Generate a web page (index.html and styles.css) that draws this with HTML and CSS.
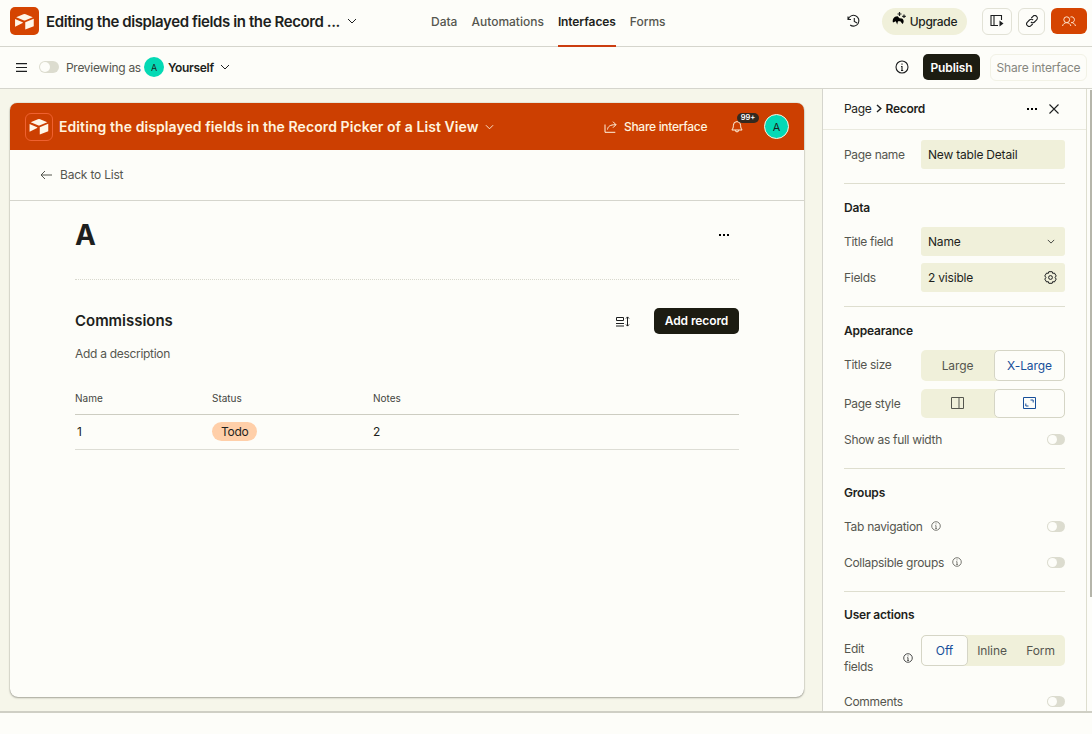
FILE: index.html
```html
<!DOCTYPE html>
<html lang="en">
<head>
  <meta charset="utf-8">
  <title>Interface designer</title>
  <link rel="stylesheet" href="styles.css">
</head>
<body>
  <svg class="defs" width="0" height="0">
    <symbol id="logo" viewBox="0 0 20 18">
      <path d="M1.2 4.4 8.8 1.2a3 3 0 0 1 2.4 0l7.6 3.2-7.7 3.2a3 3 0 0 1-2.2 0z"/>
      <path d="M0 6.3v8.2l8-3.8c.4-.2.4-.7 0-.9z"/>
      <path d="M10.8 9.7v7.8l9-3.6V6z"/>
    </symbol>
    <symbol id="chevron" viewBox="0 0 10 6">
      <path d="M1 1l4 4 4-4" fill="none" stroke="currentColor" stroke-width="1"/>
    </symbol>
    <symbol id="info" viewBox="0 0 14 14">
      <g fill="none" stroke="currentColor" stroke-width="1.1">
        <circle cx="7" cy="7" r="6"/>
        <path d="M6 6.5h1v4M6 10.5h2.2M7 3.4v1.3"/>
      </g>
    </symbol>
  </svg>

  <!-- Top bar -->
  <header class="topbar">
    <div class="base">
      <div class="base-icon"><svg width="19" height="17"><use href="#logo"/></svg></div>
      <span class="base-name">Editing the displayed fields in the Record ...</span>
      <svg class="base-chevron" width="10" height="6"><use href="#chevron"/></svg>
    </div>
    <nav class="tabs">
      <a class="tab">Data</a>
      <a class="tab">Automations</a>
      <a class="tab active">Interfaces</a>
      <a class="tab">Forms</a>
    </nav>
    <div class="top-actions">
      <svg class="history" width="14" height="14" viewBox="0 0 14 14" fill="none" stroke="currentColor" stroke-width="1.1">
        <path d="M1 2.5v3h3M1.3 5.3A5.4 5.4 0 1 1 3.2 11M7.3 4v3.4l2.8 1.6"/>
      </svg>
      <button class="upgrade">
        <svg width="14" height="14" viewBox="0 0 14 14">
          <path d="M1 10.5C0 7.5 2 4 5.6 4.2L7.5 6.3 10 6.5C12.3 8 12 10.5 10.5 12L8.3 9.2 6 9.3 5.2 12.5 3.8 9.3z"/>
          <path d="M7.5 0v4M5.5 2h4M12 2.5v3.6M10.2 4.3h3.6" fill="none" stroke="currentColor" stroke-width="1.2"/>
        </svg>
        Upgrade
      </button>
      <button class="icon-btn wide">
        <svg width="14" height="12" viewBox="0 0 14 12" fill="none" stroke="currentColor" stroke-width="1.1">
          <path d="M8 10.5H1v-10h10.5V5M4 .5v10"/>
          <path d="M9.5 5.5v6l4-3z" fill="currentColor" stroke="none"/>
        </svg>
      </button>
      <button class="icon-btn">
        <svg width="12" height="12" viewBox="0 0 12 12" fill="none" stroke="currentColor" stroke-width="1.1">
          <path d="M5.3 3 7 1.3a2.5 2.5 0 0 1 3.6 3.6L8.5 7a2.5 2.5 0 0 1-3.6 0M6.7 9 5 10.7a2.5 2.5 0 0 1-3.6-3.6L3.5 5a2.5 2.5 0 0 1 3.6 0"/>
        </svg>
      </button>
      <button class="people">
        <svg width="14" height="11" viewBox="0 0 14 11" fill="none" stroke="currentColor" stroke-width="1">
          <circle cx="4.7" cy="3.7" r="2.9"/>
          <path d="M.5 10C1.2 7.8 2.7 6.7 4.7 6.7S8.2 7.8 8.9 10M8.5 1a2.9 2.9 0 1 1 .8 5.6c2 0 3.5 1.1 4.2 3.4"/>
        </svg>
      </button>
    </div>
  </header>

  <!-- Preview bar -->
  <div class="subbar">
    <svg class="menu" width="11" height="9" viewBox="0 0 11 9" stroke="currentColor" stroke-width="1.2">
      <path d="M0 .6h11M0 4.5h11M0 8.4h11"/>
    </svg>
    <span class="toggle big"></span>
    <span class="preview-label">Previewing as</span>
    <span class="avatar">A</span>
    <strong class="preview-user">Yourself</strong>
    <svg width="10" height="6"><use href="#chevron"/></svg>
    <div class="sub-actions">
      <svg width="14" height="14"><use href="#info"/></svg>
      <button class="dark-btn publish">Publish</button>
      <button class="share-disabled">Share interface</button>
    </div>
  </div>

  <main class="workspace">
    <section class="canvas">
      <div class="card">
        <div class="card-header">
          <div class="card-icon"><svg width="20" height="17"><use href="#logo"/></svg></div>
          <span class="card-title">Editing the displayed fields in the Record Picker of a List View</span>
          <svg width="9" height="6"><use href="#chevron"/></svg>
          <div class="card-tools">
            <svg width="13" height="12" viewBox="0 0 13 12" fill="none" stroke="currentColor" stroke-width="1">
              <path d="M1 3.5v7.8h10.3M3.5 8.5c.4-2.9 2.300-4.8 8.300-4.8M9 .7l3 3-3 3"/>
            </svg>
            <span class="card-share">Share interface</span>
            <div class="bell">
              <svg width="12" height="13" viewBox="0 0 12 13" fill="none" stroke="currentColor" stroke-width="1">
                <path d="M2.4 5.2a3.6 3.6 0 0 1 7.2 0c0 2.6.7 3.6 1.5 4.8H.9c.8-1.2 1.5-2.200 1.5-4.800zM4.300 10.200a1.700 1.700 0 0 0 3.400 0"/>
              </svg>
              <span class="badge">99+</span>
            </div>
            <span class="avatar ring">A</span>
          </div>
        </div>
        <div class="back">
          <svg width="12" height="10" viewBox="0 0 12 10" fill="none" stroke="currentColor"><path d="M5 1 1 5l4 4M1 5h11"/></svg>
          Back to List
        </div>
        <div class="record">
          <div class="record-head">
            <h1>A</h1>
            <svg width="10" height="2" viewBox="0 0 10 2"><path d="M0 0h2v2H0zM4 0h2v2H4zM8 0h2v2H8z"/></svg>
          </div>
          <div class="group-head">
            <h2>Commissions</h2>
            <svg width="14" height="11" viewBox="0 0 14 11" fill="none" stroke="currentColor">
              <path d="M.5 1.5h7v3h-7zM0 7.5h8M0 10h8M11.5 1v9M10 2.5l1.5-1.6L13 2.5M10 8.5l1.5 1.6L13 8.5"/>
            </svg>
            <button class="dark-btn add">Add record</button>
          </div>
          <p class="description">Add a description</p>
          <div class="row head"><span>Name</span><span>Status</span><span>Notes</span></div>
          <div class="row"><span class="num">1</span><span><em class="pill">Todo</em></span><span>2</span></div>
        </div>
      </div>
    </section>

    <!-- Properties panel -->
    <aside class="panel">
      <div class="crumbs">
        <span>Page</span>
        <svg width="6" height="9" viewBox="0 0 6 9" fill="none" stroke="currentColor" stroke-width="1.4"><path d="M1 1l3.8 3.5L1 8"/></svg>
        <strong>Record</strong>
        <svg class="more" width="10" height="2" viewBox="0 0 10 2"><path d="M0 0h2v2H0zM4 0h2v2H4zM8 0h2v2H8z"/></svg>
        <svg width="10" height="10" viewBox="0 0 10 10" stroke="currentColor" stroke-width="1.1"><path d="M.5.5l9 9M9.5.5l-9 9"/></svg>
      </div>
      <div class="group page-group">
        <div class="prop"><label>Page name</label><div class="field">New table Detail</div></div>
      </div>
      <div class="group data-group">
        <h3>Data</h3>
        <div class="prop">
          <label>Title field</label>
          <div class="field">Name <svg class="field-chevron" width="8" height="5"><use href="#chevron"/></svg></div>
        </div>
        <div class="prop">
          <label>Fields</label>
          <div class="field">2 visible
            <svg width="13" height="13" viewBox="0 0 13 13" fill="none" stroke="currentColor">
              <path d="M4.8.7h3.4l.5 1.7 1.7-.4 1.8 2.9-1.1 1.6 1.1 1.6-1.8 2.9-1.7-.4-.5 1.7H4.8l-.5-1.7-1.7.4L.8 8.1l1.1-1.6L.8 4.900 2.600 2l1.700.4z"/>
              <circle cx="6.5" cy="6.5" r="1.9"/>
            </svg>
          </div>
        </div>
      </div>
      <div class="group look-group">
        <h3>Appearance</h3>
        <div class="prop size-prop">
          <label>Title size</label>
          <div class="segment"><span>Large</span><span class="on">X-Large</span></div>
        </div>
        <div class="prop style-prop">
          <label>Page style</label>
          <div class="segment short">
            <span><svg width="13" height="12" viewBox="0 0 13 12" fill="none" stroke="currentColor"><path d="M.5.5h12v11H.5zM8 .5v11"/></svg></span>
            <span class="on"><svg width="13" height="12" viewBox="0 0 13 12" fill="none" stroke="currentColor"><path d="M.5.5h12v11H.5zM7.5 3h2.7v2.5M5.5 9H2.8V6.5"/></svg></span>
          </div>
        </div>
        <div class="prop width-prop"><label>Show as full width</label><span class="toggle"></span></div>
      </div>
      <div class="group tabs-group">
        <h3>Groups</h3>
        <div class="prop"><label>Tab navigation <svg width="10" height="10"><use href="#info"/></svg></label><span class="toggle"></span></div>
        <div class="prop"><label>Collapsible groups <svg width="10" height="10"><use href="#info"/></svg></label><span class="toggle"></span></div>
      </div>
      <div class="group actions-group">
        <h3>User actions</h3>
        <div class="prop edit-prop">
          <label class="two-line">Edit fields</label>
          <svg class="edit-info" width="10" height="10"><use href="#info"/></svg>
          <div class="segment three"><span class="on">Off</span><span>Inline</span><span>Form</span></div>
        </div>
        <div class="prop"><label>Comments</label><span class="toggle"></span></div>
      </div>
    </aside>
    <div class="scrollbar"><div class="thumb"></div></div>
  </main>
</body>
</html>
```
FILE: styles.css
```css
* {
  box-sizing: border-box;
}

body {
  margin: 0;
  height: 734px;
  overflow: hidden;
  background: #fdfdf9;
  color: #1d1f20;
  font-family: Inter, "Liberation Sans", sans-serif;
  font-size: 12px;
  letter-spacing: -0.3px;
}

h1, h2, h3, p {
  margin: 0;
}

button {
  font: inherit;
  letter-spacing: inherit;
  color: inherit;
  padding: 0;
  border: 0;
  display: flex;
  align-items: center;
  justify-content: center;
}

svg {
  flex: none;
  display: block;
}

.defs {
  display: none;
}

/* Top bar */
.topbar {
  display: flex;
  height: 47px;
  border-bottom: 1px solid #d5d5cd;
}

.base {
  display: flex;
  align-items: center;
  width: 431px;
  padding: 0 0 4px 10px;
}

.base-icon {
  display: flex;
  align-items: center;
  justify-content: center;
  width: 29px;
  height: 28px;
  margin-right: 7px;
  border-radius: 5px;
  background: #d54401;
  fill: #fff7e8;
}

.base-name {
  width: 294px;
  margin-right: 7px;
  font-size: 15px;
  font-weight: 600;
  letter-spacing: -0.4px;
  white-space: nowrap;
}

.tabs {
  display: flex;
  gap: 14px;
}

.tab {
  height: 47px;
  line-height: 43px;
  font-weight: 500;
  color: #55564f;
  letter-spacing: 0;
}

.tab.active {
  color: #1d1f20;
  font-weight: 600;
  letter-spacing: -0.1px;
  border-bottom: 2px solid #cb3d10;
}

.top-actions {
  display: flex;
  align-items: center;
  margin-left: auto;
  padding: 0 5px 4px 0;
}

.history {
  margin-right: 2px;
}

.upgrade {
  gap: 4px;
  width: 85px;
  height: 27px;
  margin: 0 15px 0 19px;
  border-radius: 14px;
  background: #f0f0da;
  font-weight: 500;
}

.upgrade svg {
  margin-bottom: 4px;
}

.icon-btn {
  width: 27px;
  height: 27px;
  margin-right: 6px;
  border: 1px solid #e2e2d6;
  border-radius: 6px;
  background: none;
}

.icon-btn.wide {
  width: 30px;
}

.people {
  width: 36px;
  height: 26px;
  border-radius: 6px;
  background: #d54401;
  color: #ffe6d0;
}

/* Preview bar */
.subbar {
  display: flex;
  align-items: center;
  height: 42px;
  padding: 0 5px 1px 16px;
  border-bottom: 1px solid #d5d5cd;
}

.toggle {
  position: relative;
  flex: none;
  width: 18px;
  height: 11px;
  border-radius: 6px;
  background: #dcdccf;
}

.toggle::before {
  content: "";
  position: absolute;
  left: 1px;
  top: 1px;
  width: 9px;
  height: 9px;
  border-radius: 50%;
  background: #fdfdf9;
}

.toggle.big {
  width: 20px;
  height: 12px;
  margin: 0 7px 0 12px;
}

.toggle.big::before {
  width: 10px;
  height: 10px;
}

.preview-label {
  color: #55564f;
}

.avatar {
  display: flex;
  align-items: center;
  justify-content: center;
  width: 20px;
  height: 20px;
  margin: 0 4px 0 3px;
  border-radius: 50%;
  background: #04d9b4;
  font-size: 9px;
}

.preview-user {
  margin-right: 6px;
  font-weight: 600;
}

.sub-actions {
  display: flex;
  align-items: center;
  margin-left: auto;
}

.dark-btn {
  height: 26px;
  border-radius: 5px;
  background: #1c1c12;
  color: #fff;
  font-weight: 600;
  letter-spacing: -0.1px;
}

.publish {
  width: 57px;
  margin: 0 10px 0 14px;
}

.share-disabled {
  width: 97px;
  height: 27px;
  border: 1px solid #f2f2e6;
  border-radius: 6px;
  background: none;
  color: #85867e;
  letter-spacing: -0.18px;
}

/* Workspace */
.workspace {
  display: flex;
  height: 624px;
  border-bottom: 2px solid #cfcfc5;
}

.canvas {
  width: 822px;
  padding: 14px 18px 14px 10px;
  background: #f6f6ea;
}

.card {
  height: 594px;
  border-radius: 8px;
  background: #fdfdf9;
  box-shadow: 0 0 1px #77776c, 0 1px 2px #aaaa9f;
}

.card-header {
  display: flex;
  align-items: center;
  height: 47px;
  padding: 0 15px;
  border-radius: 7px 7px 0 0;
  background: #cc3f01;
  color: #fff3df;
}

.card-icon {
  display: flex;
  align-items: center;
  justify-content: center;
  width: 28px;
  height: 28px;
  margin-right: 6px;
  border: 1px solid #ef6130;
  border-radius: 6px;
  fill: #fff7e8;
}

.card-title {
  width: 420px;
  margin-right: 6px;
  font-size: 14px;
  font-weight: 600;
  letter-spacing: 0.08px;
  white-space: nowrap;
}

.card-tools {
  display: flex;
  align-items: center;
  margin-left: auto;
}

.card-share {
  width: 83px;
  margin: 0 24px 0 7px;
  font-weight: 500;
  white-space: nowrap;
}

.bell {
  position: relative;
  margin-right: 21px;
}

.badge {
  position: absolute;
  left: 6px;
  top: -7px;
  width: 22px;
  height: 10px;
  border-radius: 5px;
  background: #33291f;
  color: #fff;
  font-size: 7.5px;
  font-weight: 600;
  letter-spacing: 0;
  line-height: 10px;
  text-align: center;
}

.avatar.ring {
  width: 25px;
  height: 25px;
  margin: 0;
  border: 1px solid #fff3df;
  color: #1d1f20;
  font-size: 11px;
}

.back {
  display: flex;
  align-items: center;
  gap: 8px;
  height: 51px;
  padding: 0 0 1px 30px;
  border-bottom: 1px solid #d5d5cd;
  color: #55564f;
  letter-spacing: -0.2px;
}

.record {
  padding: 0 65px;
}

.record-head {
  display: flex;
  align-items: center;
  justify-content: space-between;
  height: 79px;
  padding: 0 10px 10px 0;
  border-bottom: 1px dotted #d8d8ce;
}

.record-head h1 {
  font-size: 28px;
  font-weight: 700;
}

.group-head {
  display: flex;
  align-items: center;
  margin-top: 28px;
}

.group-head h2 {
  padding-bottom: 2px;
  font-size: 15px;
  font-weight: 600;
  letter-spacing: -0.03px;
}

.group-head svg {
  margin: 0 24px 0 auto;
}

.add {
  width: 85px;
  padding-bottom: 1px;
}

.description {
  margin-top: 12px;
  height: 36px;
  line-height: 16px;
  color: #55564f;
}

.row {
  display: grid;
  grid-template-columns: 137px 161px 1fr;
  align-items: center;
  height: 35px;
  padding-bottom: 1px;
  border-bottom: 1px solid #ddddd5;
}

.row.head {
  height: 33px;
  padding: 0;
  border-color: #cdcdc2;
  color: #44453f;
  font-size: 10px;
  letter-spacing: 0;
}

.num {
  padding-left: 2px;
}

.pill {
  display: inline-block;
  padding: 0 9px;
  border-radius: 10px;
  background: #ffcfa9;
  font-style: normal;
  line-height: 19px;
}

/* Properties panel */
.panel {
  width: 265px;
  border-left: 1px solid #d5d5cd;
  border-right: 1px solid #dedecf;
  overflow: hidden;
}

.crumbs {
  display: flex;
  align-items: center;
  gap: 4px;
  height: 41px;
  padding: 0 27px 1px 21px;
  border-bottom: 1px solid #eaeadf;
}

.crumbs strong {
  font-weight: 600;
}

.crumbs .more {
  margin: 0 8px 0 auto;
}

.group {
  margin: 0 21px;
  border-bottom: 1px solid #dedecf;
}

.group h3 {
  height: 16px;
  line-height: 16px;
  font-size: 12px;
  font-weight: 600;
  letter-spacing: -0.2px;
}

.prop {
  display: flex;
  align-items: center;
  justify-content: space-between;
  height: 36px;
}

.prop label {
  display: flex;
  align-items: center;
  gap: 8px;
  color: #55564f;
}

.field {
  display: flex;
  align-items: center;
  justify-content: space-between;
  width: 144px;
  height: 29px;
  padding: 0 8px 0 7px;
  border-radius: 3px;
  background: #f0f0da;
  letter-spacing: -0.2px;
}

.field-chevron {
  margin-right: 2px;
}

.segment {
  display: grid;
  grid-template-columns: 73px 71px;
  width: 144px;
  height: 31px;
  border-radius: 5px;
  background: #f0f0da;
  color: #55564f;
  letter-spacing: -0.1px;
}

.segment.short {
  height: 29px;
}

.segment.three {
  grid-template-columns: 47px 48px 49px;
}

.segment span {
  display: flex;
  align-items: center;
  justify-content: center;
}

.segment .on {
  border: 1px solid #d5d5c6;
  border-radius: 5px;
  background: #fdfdf9;
  color: #174f9a;
}

.page-group {
  height: 54px;
  padding-top: 6px;
}

.data-group {
  height: 123px;
  padding-top: 16px;
}

.data-group h3 {
  margin-bottom: 7px;
}

.look-group {
  height: 162px;
  padding-top: 16px;
}

.size-prop {
  height: 38px;
  margin-top: 7px;
}

.size-prop label {
  margin-bottom: 1px;
}

.style-prop {
  height: 37px;
  padding-top: 1px;
}

.tabs-group {
  height: 123px;
  padding-top: 16px;
}

.tabs-group h3 {
  margin-bottom: 7px;
}

.actions-group {
  padding-top: 15px;
  border: 0;
}

.edit-prop {
  align-items: flex-start;
  height: 60px;
  padding-top: 12px;
}

.prop .two-line {
  width: 34px;
  padding-top: 5px;
  line-height: 18px;
}

.edit-info {
  margin: 18px 8px 0 auto;
}

/* Scrollbar */
.scrollbar {
  display: flex;
  flex: 1;
  justify-content: flex-end;
  padding-top: 1px;
}

.thumb {
  width: 2px;
  height: 507px;
  background: #b5b5aa;
}
```
